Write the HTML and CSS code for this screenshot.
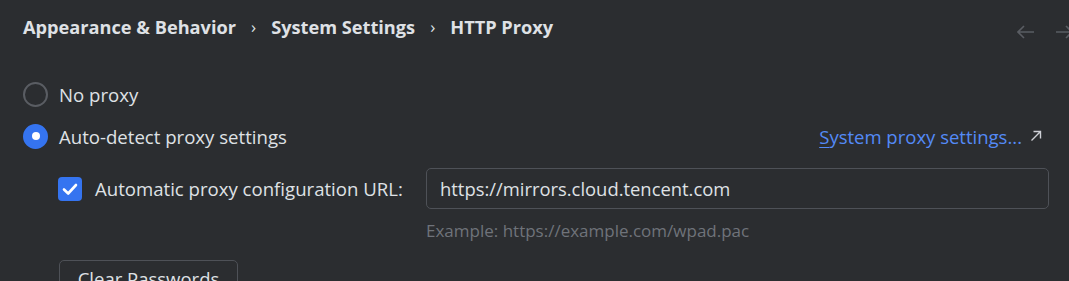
FILE: index.html
```html
<!DOCTYPE html>
<html>
<head>
<meta charset="utf-8">
<link rel="stylesheet" href="styles.css">
</head>
<body>
<div class="page">
  <header class="header">
    <nav class="crumbs">
      <span class="crumb">Appearance &amp; Behavior</span>
      <span class="sep">›</span>
      <span class="crumb">System Settings</span>
      <span class="sep">›</span>
      <span class="crumb">HTTP Proxy</span>
    </nav>
    <div class="history">
      <svg class="arrow" width="18" height="14" viewBox="0 0 18 14"><path d="M1 7H17M7 1L1 7L7 13" fill="none" stroke="#5a5d63" stroke-width="1.6"/></svg>
      <svg class="arrow" width="18" height="14" viewBox="0 0 18 14"><path d="M1 7H17M11 1L17 7L11 13" fill="none" stroke="#5a5d63" stroke-width="1.6"/></svg>
    </div>
  </header>

  <div class="content">
    <div class="row radio-row first">
      <span class="radio"></span>
      <span class="label">No proxy</span>
    </div>
    <div class="row radio-row">
      <span class="radio checked"></span>
      <span class="label">Auto-detect proxy settings</span>
      <a class="link"><span class="link-text"><u>S</u>ystem proxy settings...</span>
        <svg class="ext" width="12" height="12" viewBox="0 0 12 12"><path d="M1.5 10.5L10.5 1.5M3.5 1.5H10.5V8.5" fill="none" stroke="#ced0d6" stroke-width="1.4"/></svg>
      </a>
    </div>
    <div class="row pac-row">
      <span class="checkbox">
        <svg width="24" height="24" viewBox="0 0 24 24"><path d="M6 12.5L10.2 16.5L18 8" fill="none" stroke="#fff" stroke-width="2.6" stroke-linecap="round" stroke-linejoin="round"/></svg>
      </span>
      <span class="label pac-label">Automatic proxy configuration URL:</span>
      <div class="input">https://mirrors.cloud.tencent.com</div>
    </div>
    <div class="hint">Example: https://example.com/wpad.pac</div>
    <button class="button">Clear Passwords</button>
  </div>
</div>
</body>
</html>
```
FILE: styles.css
```css
html, body {
  margin: 0;
  padding: 0;
  background: #2b2d30;
  overflow: hidden;
}
body {
  width: 1069px;
  height: 281px;
  font-family: "Open Sans", "Noto Sans", sans-serif;
  color: #dfe1e5;
}
.page {
  display: flex;
  flex-direction: column;
}
.header {
  height: 53px;
  display: flex;
  align-items: center;
  justify-content: space-between;
  padding-left: 23px;
}
.crumbs {
  display: flex;
  align-items: center;
  font-weight: 700;
  font-size: 18.2px;
  color: #dfe1e5;
}
.sep {
  font-weight: 400;
  margin: 0 15px;
  font-size: 17px;
}
.history {
  display: flex;
  gap: 20px;
  margin-right: -4px;
  padding-top: 10px;
}
.content {
  padding-left: 23px;
  padding-right: 20px;
  display: flex;
  flex-direction: column;
}
.row {
  display: flex;
  align-items: center;
}
.radio-row {
  height: 42px;
}
.radio-row.first {
  margin-top: 20px;
}
.radio {
  width: 21px;
  height: 21px;
  border: 2px solid #5a5d63;
  border-radius: 50%;
  margin-right: 11px;
  flex: none;
  position: relative;
}
.radio.checked {
  background: #3574f0;
  border-color: #3574f0;
}
.radio.checked::after {
  content: "";
  position: absolute;
  left: 50%;
  top: 50%;
  width: 8px;
  height: 8px;
  margin: -4px 0 0 -4px;
  border-radius: 50%;
  background: #fff;
}
.label {
  font-size: 18.6px;
}
.link {
  margin-left: auto;
  margin-right: 7px;
  color: #548af7;
  font-size: 18.5px;
  display: flex;
  align-items: center;
}
.link u {
  text-decoration-thickness: 1px;
  text-underline-offset: 3px;
}
.ext {
  margin-left: 8px;
}
.pac-row {
  margin-top: 11px;
  height: 41px;
  padding-left: 35px;
}
.checkbox {
  width: 24px;
  height: 24px;
  border-radius: 4px;
  background: #3574f0;
  flex: none;
  display: flex;
  margin-right: 13px;
}
.pac-label {
  width: 331px;
  flex: none;
}
.input {
  flex: 1;
  border: 1px solid #4e5157;
  border-radius: 5px;
  box-sizing: border-box;
  height: 41px;
  display: flex;
  align-items: center;
  padding-left: 13px;
  font-size: 18.4px;
}
.hint {
  margin-top: 12px;
  margin-left: 403px;
  line-height: 20px;
  font-size: 17px;
  color: #6f737a;
}
.button {
  margin-top: 19px;
  margin-left: 36px;
  width: 179px;
  height: 36px;
  align-self: flex-start;
  background: #2b2d30;
  border: 1px solid #4e5157;
  border-radius: 5px;
  color: #dfe1e5;
  font-family: inherit;
  font-size: 18.5px;
}
```
